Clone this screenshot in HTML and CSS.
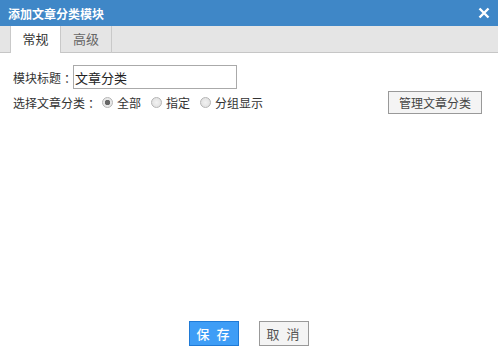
FILE: index.html
```html
<!DOCTYPE html>
<html lang="zh-CN">
<head>
	<meta charset="UTF-8">
	<title>添加文章分类模块</title>
	<link rel="stylesheet" href="styles.css">
</head>
<body>
<div class="dialog">
	<div class="titlebar">
		<span class="title">添加文章分类模块</span>
		<span class="close">
			<svg width="12" height="12" viewBox="0 0 12 12"><path d="M1.5 1.5 L10.5 10.5 M10.5 1.5 L1.5 10.5" stroke="#fff" stroke-width="2.4"/></svg>
		</span>
	</div>
	<div class="tabs">
		<span class="tab active">常规</span>
		<span class="tab">高级</span>
	</div>
	<div class="content">
		<div class="row">
			<label class="lbl">模块标题<span class="colon">：</span></label>
			<input class="txt" type="text" value="文章分类">
		</div>
		<div class="row row2">
			<span class="lbl">选择文章分类<span class="colon">：</span></span>
			<label class="opt"><span class="radio checked"></span>全部</label>
			<label class="opt"><span class="radio"></span>指定</label>
			<label class="opt"><span class="radio"></span>分组显示</label>
			<button class="manage" type="button">管理文章分类</button>
		</div>
	</div>
	<div class="footer">
		<button class="btn save" type="button">保 存</button>
		<button class="btn cancel" type="button">取 消</button>
	</div>
</div>
</body>
</html>
```
FILE: styles.css
```css
html, body{
	margin: 0;
	padding: 0;
	background: #fff;
}
body{
	font-family: "Noto Sans CJK SC", "Liberation Sans", sans-serif;
	font-size: 12px;
	color: #333;
}
.dialog{
	width: 498px;
	height: 361px;
	display: flex;
	flex-direction: column;
}
.titlebar{
	height: 26px;
	background: #3f87c7;
	display: flex;
	align-items: center;
	justify-content: space-between;
	padding: 0 8px;
}
.title{
	color: #fff;
	font-weight: bold;
	font-size: 12px;
}
.close{
	display: flex;
}
.tabs{
	height: 26px;
	background: #e5e5e5;
	border-bottom: 1px solid #c6c6c6;
	display: flex;
	padding-left: 10px;
}
.tab{
	width: 50px;
	height: 27px;
	line-height: 26px;
	text-align: center;
	border-right: 1px solid #c9c9c9;
	color: #666;
	font-size: 13px;
}
.tab.active{
	background: #fff;
	border-left: 1px solid #c9c9c9;
	color: #333;
	width: 49px;
}
.content{
	flex: 1;
	padding: 12px 16px 0 13px;
}
.row{
	display: flex;
	align-items: center;
	height: 24px;
}
.row2{
	margin-top: 1px;
}
.lbl{
	font-size: 12px;
	color: #333;
	display: flex;
	align-items: center;
}
.colon{
	display: inline-block;
	width: 12px;
	text-align: center;
	text-indent: 3px;
}
.txt{
	width: 164px;
	height: 24px;
	box-sizing: border-box;
	border: 1px solid #aaa;
	padding: 0 1px;
	margin: 0;
	font-family: inherit;
	font-size: 13px;
	color: #222;
}
.opt{
	display: flex;
	align-items: center;
	font-size: 12px;
	margin-left: 10px;
}
.opt:first-of-type{
	margin-left: 5px;
}
.radio{
	width: 11px;
	height: 11px;
	border-radius: 50%;
	border: 1px solid #b5b5b5;
	background: radial-gradient(circle, #f2f2f2 0, #dcdcdc 100%);
	margin-right: 4px;
	box-sizing: border-box;
	display: inline-block;
}
.radio.checked{
	background: radial-gradient(circle, #666 0, #666 2.5px, #e8e8e8 3px);
}
.manage{
	margin-left: auto;
	width: 94px;
	height: 23px;
	border: 1px solid #999;
	background: #f4f4f4;
	color: #444;
	font-family: inherit;
	font-size: 12px;
	padding: 0;
}
.footer{
	display: flex;
	justify-content: center;
	gap: 20px;
	padding-bottom: 15px;
}
.btn{
	width: 50px;
	height: 25px;
	font-family: inherit;
	font-size: 13px;
	padding: 0;
	letter-spacing: 2px;
}
.save{
	background: #3e9df6;
	border: 1px solid #1f7ad6;
	color: #fff;
	font-weight: 500;
}
.cancel{
	background: #f4f4f4;
	border: 1px solid #999;
	color: #555;
}
```
